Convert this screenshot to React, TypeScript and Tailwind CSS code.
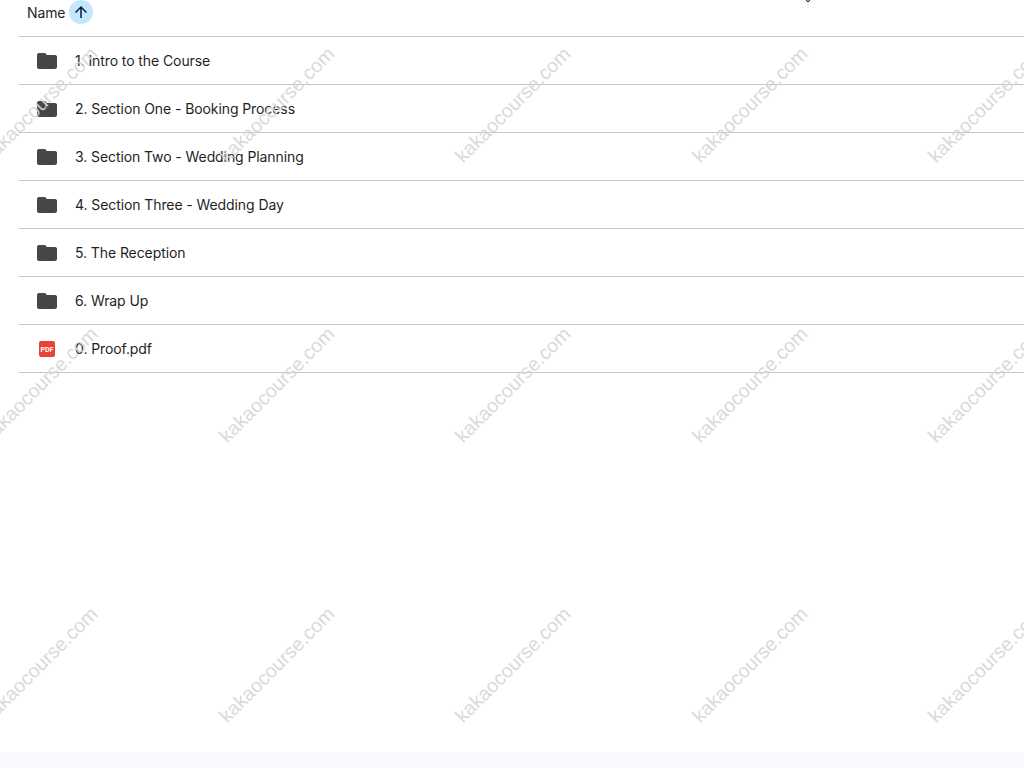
import React from 'react';

interface DriveItem {
  name: string;
  type: 'folder' | 'pdf';
}

const items: DriveItem[] = [
  { name: '1. Intro to the Course', type: 'folder' },
  { name: '2. Section One - Booking Process', type: 'folder' },
  { name: '3. Section Two - Wedding Planning', type: 'folder' },
  { name: '4. Section Three - Wedding Day', type: 'folder' },
  { name: '5. The Reception', type: 'folder' },
  { name: '6. Wrap Up', type: 'folder' },
  { name: '0. Proof.pdf', type: 'pdf' }
];

const marks = [105, 385, 665].flatMap((y) =>
  [40, 277, 513, 750, 986].map((x) => ({ x, y }))
);

function FolderIcon() {
  return (
    <svg width="24" height="24" viewBox="0 0 24 24" className="text-[#444746]" fill="currentColor">
      <path d="M10 4H4c-1.1 0-1.99.9-1.99 2L2 18c0 1.1.9 2 2 2h16c1.1 0 2-.9 2-2V8c0-1.1-.9-2-2-2h-8l-2-2z" />
    </svg>
  );
}

function PdfIcon() {
  return (
    <svg width="24" height="24" viewBox="0 0 24 24">
      <rect x="4" y="4" width="16" height="16" rx="2" fill="#ea4335" />
      <text x="12" y="14.6" textAnchor="middle" fontSize="7" fontWeight="700" fill="#ffffff" fontFamily="Roboto, sans-serif">PDF</text>
    </svg>
  );
}

export default function App() {
  return (
    <div className="relative h-[768px] w-[1024px] overflow-hidden bg-white font-['Inter',sans-serif] text-[#1f1f1f]">
      <div className="pl-[19px]">
        <div className="flex h-[37px] items-start border-b border-[#c7c7c7] pl-2">
          <span className="mt-[5px] text-sm leading-4 tracking-[-0.1px]">Name</span>
          <span className="ml-1 flex h-6 w-6 items-center justify-center rounded-full bg-[#c2e7ff] text-[#001d35]">
            <svg width="18" height="18" viewBox="0 0 24 24" fill="currentColor">
              <path d="M4 12l1.41 1.41L11 7.83V20h2V7.83l5.58 5.59L20 12l-8-8-8 8z" />
            </svg>
          </span>
        </div>
        {items.map((item) => (
          <div key={item.name} className="flex h-12 items-center border-b border-[#c7c7c7] pl-4">
            {item.type === 'folder' ? <FolderIcon /> : <PdfIcon />}
            <span className="ml-4 text-sm tracking-[-0.09px]">{item.name}</span>
          </div>
        ))}
      </div>

      <div className="absolute bottom-0 left-0 h-4 w-full bg-[#f9fafe]" />

      {marks.map((m) => (
        <span
          key={`${m.x}-${m.y}`}
          className="absolute -translate-x-1/2 -translate-y-1/2 -rotate-45 whitespace-nowrap font-['Liberation_Sans',sans-serif] text-[19.6px] text-[#d6d6d6] opacity-90"
          style={{ left: m.x, top: m.y }}
        >
          kakaocourse.com
        </span>
      ))}

      <span className="absolute left-[806px] top-[-2px] h-1 w-1 rounded-full border border-black bg-white" />
    </div>
  );
}
